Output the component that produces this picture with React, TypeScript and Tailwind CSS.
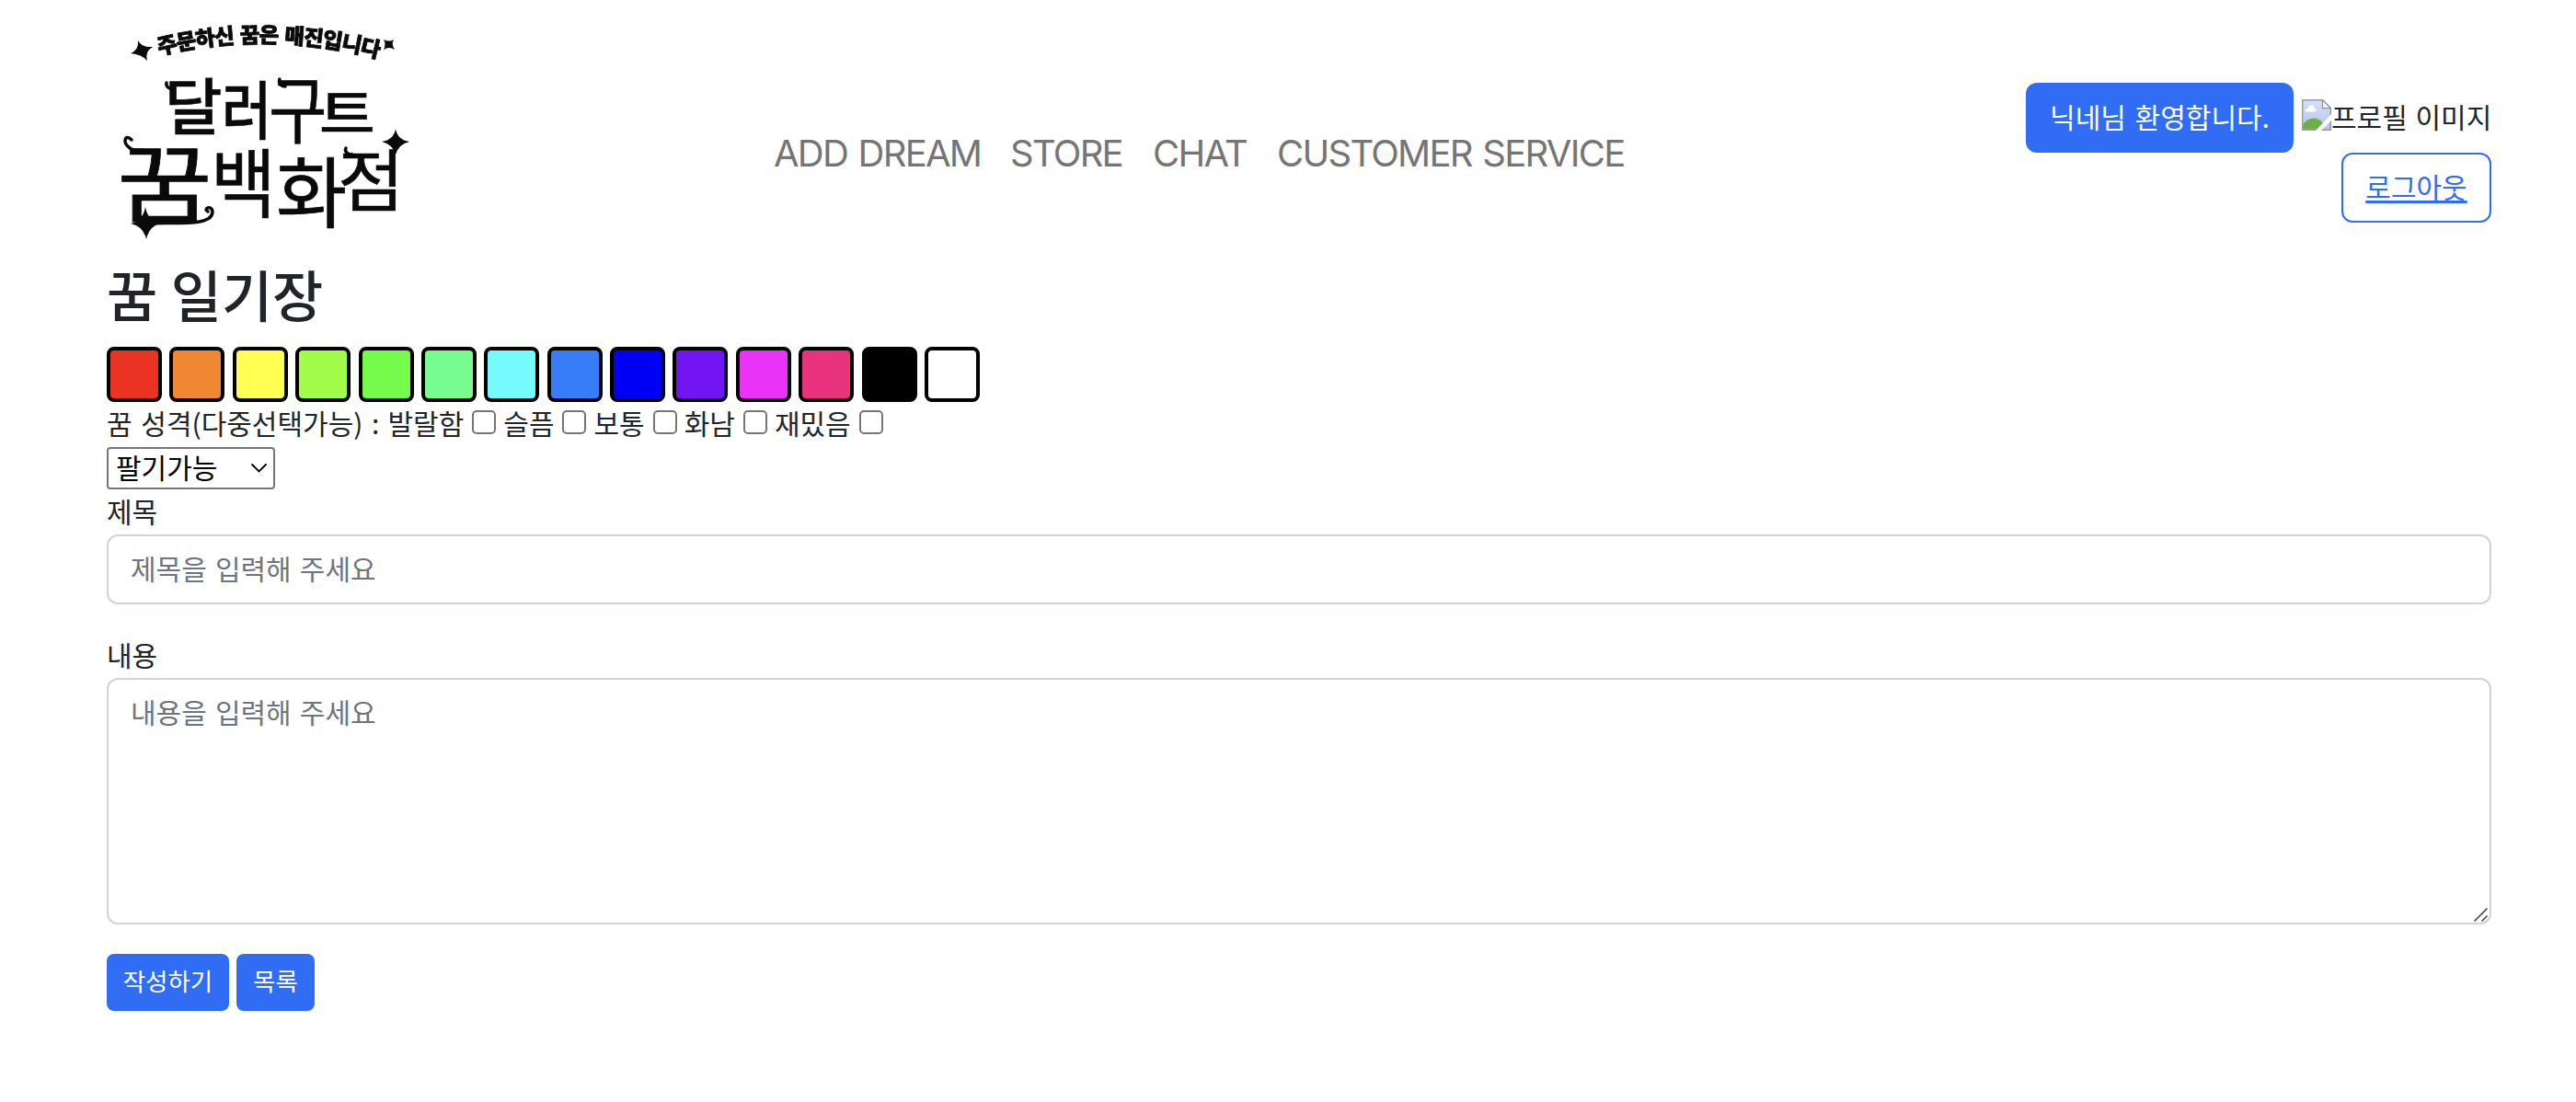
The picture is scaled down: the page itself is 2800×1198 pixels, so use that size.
import React from 'react';

const swatches = [
  'bg-[#ea3323]', 'bg-[#f08733]', 'bg-[#ffff54]', 'bg-[#a2fd4b]', 'bg-[#75fb4c]', 'bg-[#78fc8f]', 'bg-[#75fbfd]',
  'bg-[#377df7]', 'bg-[#0000f5]', 'bg-[#7314f5]', 'bg-[#ea33f7]', 'bg-[#ea337f]', 'bg-black', 'bg-white',
];

const moods = ['발랄함', '슬픔', '보통', '화남', '재밌음'];

type Glyph = { ch: string; x: number; y: number; sx: number; sy: number; weight: number };

/* Each logo syllable: left edge, baseline, and horizontal/vertical stretch. */
const glyphs: Glyph[] = [
  { ch: '달', x: 179, y: 141, sx: 0.68, sy: 0.67, weight: 500 },
  { ch: '러', x: 241, y: 146, sx: 0.59, sy: 0.69, weight: 500 },
  { ch: '구', x: 292, y: 149, sx: 0.69, sy: 0.8, weight: 400 },
  { ch: '트', x: 347, y: 144, sx: 0.66, sy: 0.56, weight: 500 },
  { ch: '꿈', x: 127, y: 235, sx: 1.13, sy: 0.93, weight: 400 },
  { ch: '백', x: 229, y: 230, sx: 0.77, sy: 0.82, weight: 400 },
  { ch: '화', x: 300, y: 241, sx: 0.84, sy: 0.84, weight: 400 },
  { ch: '점', x: 367, y: 224, sx: 0.79, sy: 0.74, weight: 400 },
];

function Logo() {
  return (
    <svg width="340" height="280" viewBox="116 0 340 280" className="block shrink-0 blur-[0.6px]" role="img">
      <path id="arc" d="M173 60 Q290 31 414 64" fill="none" />
      <text fontFamily="'Noto Sans CJK KR', sans-serif" fontSize="23.5" fontWeight="900" fill="#0a0a0a" stroke="#0a0a0a" strokeWidth="0.8">
        <textPath href="#arc" textLength="241" lengthAdjust="spacing">주문하신 꿈은 매진입니다</textPath>
      </text>
      {glyphs.map((g) => (
        <text
          key={g.ch}
          transform={`translate(${g.x} ${g.y}) scale(${g.sx} ${g.sy})`}
          fontFamily="'Noto Sans CJK KR', sans-serif"
          fontSize="100"
          fontWeight={g.weight}
          fill="#0a0a0a"
          stroke="#0a0a0a"
          strokeWidth="0.8"
        >
          {g.ch}
        </text>
      ))}
      <g fill="#0a0a0a">
        <path d="M150 44 Q154 52 166 51 Q157 56 160 66 Q154 59 142 58 Q151 54 150 44Z" />
        <path d="M417 43 Q423 46 428 43 Q425 48 429 54 Q423 50 417 54 Q420 48 417 43Z" />
        <path d="M430 140 Q432 152 445 154 Q433 157 430 168 Q427 157 415 154 Q428 152 430 140Z" />
        <path d="M158 225 Q161 241 174 243 Q162 246 159 260 Q156 246 142 243 Q155 241 158 225Z" />
      </g>
      <g fill="none" stroke="#0a0a0a" strokeLinecap="round" strokeWidth="3.5">
        <path d="M143 152 C136 145 133 155 140 160 C144 164 149 164 154 163" />
        <path d="M181 90 C180 94 184 97 188 97" />
        <path d="M304 86 C302 91 306 94 310 94" />
        <path d="M376 161 C374 165 378 168 383 168" />
        <path d="M160 243 C190 241 231 247 231 230 C230 222 220 227 226 230" />
      </g>
    </svg>
  );
}

function BrokenImage() {
  return (
    <svg width="32" height="34" viewBox="0 0 32 34" className="block">
      <defs>
        <linearGradient id="sky" x1="0" y1="0" x2="0" y2="1">
          <stop offset="0" stopColor="#d5e1fa" />
          <stop offset="1" stopColor="#b4c3ea" />
        </linearGradient>
      </defs>
      <path d="M0.7 0.7H22.5L31.3 9.5V33.3H0.7Z" fill="url(#sky)" stroke="#999" strokeWidth="1.4" />
      <path d="M22.5 0.7V9.5H31.3Z" fill="#fff" stroke="#999" strokeWidth="1.4" />
      <path d="M4 13.5C3 10 7 9.500 7.500 9C8 5 14 5.500 14 10C16 10.500 16 13.500 14.500 13.500Z" fill="#fff" />
      <path d="M1.400 32.600V27C7 19 17 18 23 26L17 32.600Z" fill="#70ad47" />
      <path d="M32 16L15 34H21L32 23Z" fill="#fff" />
    </svg>
  );
}

export default function App() {
  return (
    <div className="min-h-[1198px] bg-white pr-[92px] pl-[116px] font-['Noto_Sans_CJK_KR',sans-serif] text-[30px] leading-[48px] whitespace-nowrap text-[#212529] [word-spacing:2px]">
      <header className="flex h-[280px] items-start justify-between">
        <Logo />
        <nav className="mr-auto ml-[385px] flex gap-[34px] pt-[143px] font-['Inter'] text-[40px] leading-[48px] tracking-[-1.75px] text-[#757575]">
          <a className="w-[223px]">ADD DREAM</a>
          <a className="w-[121px]">STORE</a>
          <a className="w-[101px]">CHAT</a>
          <a>CUSTOMER SERVICE</a>
        </nav>
        <div className="flex flex-col items-end pt-[90px]">
          <div className="flex items-center gap-[9px]">
            <button className="flex h-[76px] w-[291px] items-center justify-center rounded-xl bg-[#316df4] pb-1 text-white [word-spacing:3px]">닉네님 환영합니다.</button>
            <span className="flex w-[206px] items-center">
              <span className="-mt-[7px]"><BrokenImage /></span>
              <span className="pb-1">프로필 이미지</span>
            </span>
          </div>
          <button className="flex h-[76px] w-[163px] items-center justify-center rounded-xl border-2 border-[#316df4] pb-1 text-[#316df4] underline decoration-[3px] underline-offset-[3px]">로그아웃</button>
        </div>
      </header>

      <main>
        <h1 className="h-[97px] pt-[3px] text-[60px] leading-[72px] font-medium [word-spacing:1px]">꿈 일기장</h1>
        <div className="flex gap-[8.38px]">
          {swatches.map((c) => (
            <span key={c} className={`h-[60px] w-[60px] shrink-0 rounded-lg border-4 border-black ${c}`} />
          ))}
        </div>
        <div className="flex h-12 items-center pb-1">
          <span className="mr-[9px] [word-spacing:3px]">꿈 성격(다중선택가능) :</span>
          {moods.map((m) => (
            <label key={m} className="mr-2 flex items-center">
              {m}
              <input type="checkbox" className="ml-[9px] h-[26px] w-[26px] appearance-none rounded-[5px] border-2 border-[#767676] bg-white" />
            </label>
          ))}
        </div>
        <button className="mt-px flex h-[46px] w-[183px] items-center justify-between rounded border-2 border-[#767676] pr-[6px] pl-2 text-black">
          <span className="pb-1">팔기가능</span>
          <svg width="19" height="12" viewBox="0 0 19 12" fill="none" stroke="#000" strokeWidth="1.900">
            <path d="M1.500 1.500L9.500 9.500L17.500 1.500" />
          </svg>
        </button>
        <label className="-mt-px block h-[50px]">제목</label>
        <input
          className="block h-[76px] w-full rounded-xl border-2 border-[#ced4da] px-6 pb-1 placeholder:text-[#6c757d] placeholder:opacity-100 [word-spacing:2.4px]"
          placeholder="제목을 입력해 주세요"
        />
        <label className="mt-[30px] block h-[50px]">내용</label>
        <div className="relative">
          <textarea
            className="block h-[268px] w-full resize-none rounded-xl border-2 border-[#ced4da] px-6 pt-[10px] placeholder:text-[#6c757d] placeholder:opacity-100 [word-spacing:2.4px]"
            placeholder="내용을 입력해 주세요"
          />
          <svg className="absolute right-1 bottom-[3px]" width="15" height="15" viewBox="0 0 15 15" stroke="#555" strokeWidth="1.700">
            <path d="M0.500 14.500L14.500 0.500M8.500 14.500L14.500 8.500" />
          </svg>
        </div>
        <div className="mt-8 flex gap-2 text-[26.500px] text-white">
          <button className="flex h-[62px] w-[133px] items-center justify-center rounded-lg bg-[#316df4] pb-1">작성하기</button>
          <button className="flex h-[62px] w-[85px] items-center justify-center rounded-lg bg-[#316df4] pb-1">목록</button>
        </div>
      </main>
    </div>
  );
}
